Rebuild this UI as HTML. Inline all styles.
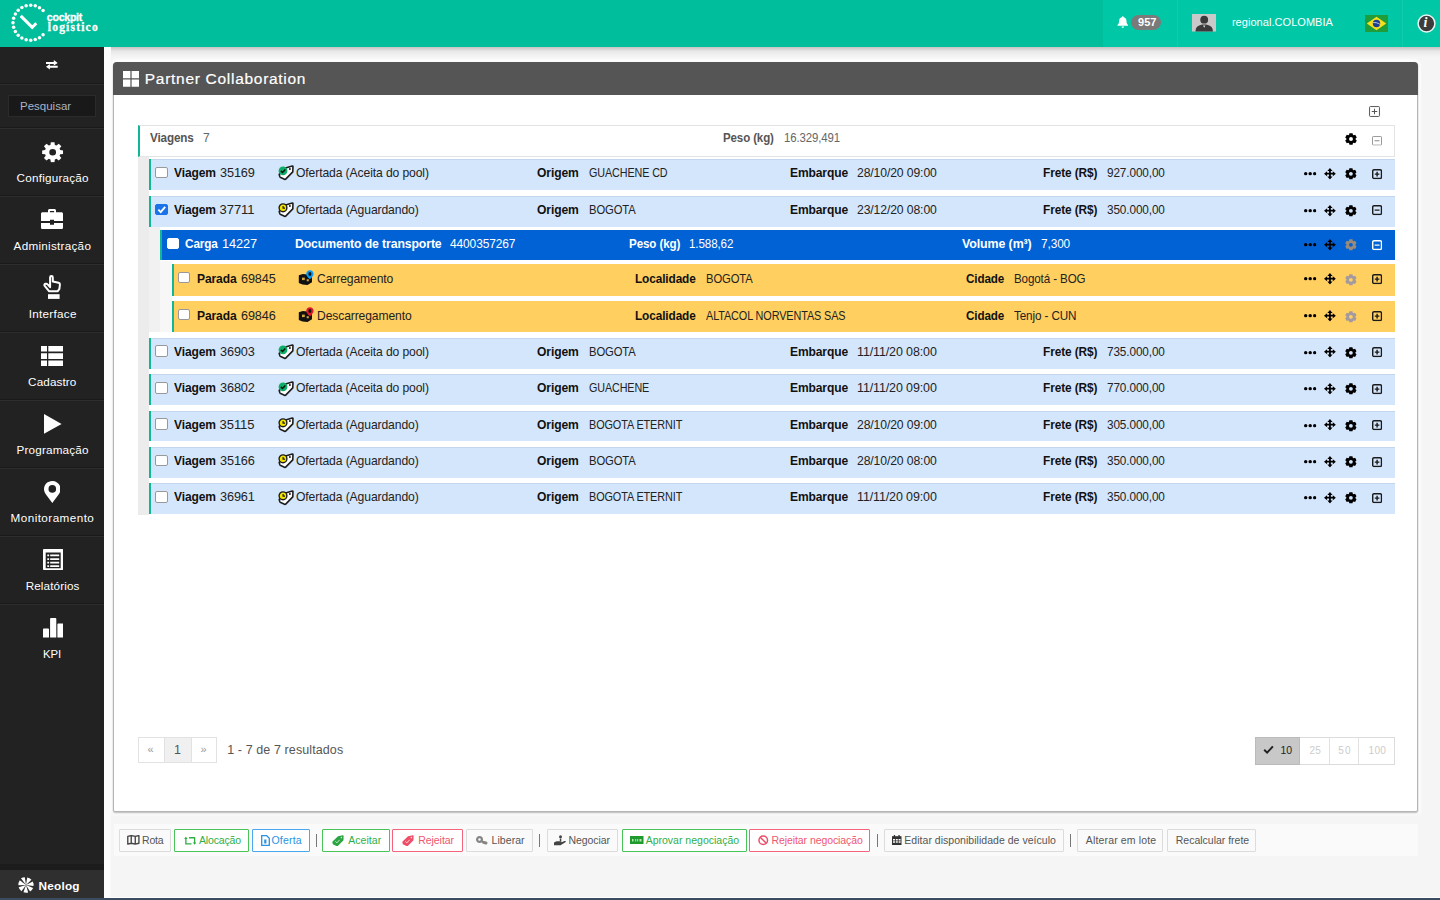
<!DOCTYPE html>
<html lang="pt-BR"><head><meta charset="utf-8"><title>Partner Collaboration</title>
<style>*{box-sizing:border-box;margin:0;padding:0}
html,body{width:1440px;height:900px;overflow:hidden}
body{position:relative;background:#f5f5f5;font-family:"Liberation Sans",sans-serif;font-size:12px;color:#222}
.abs{position:absolute}
.t{position:absolute;white-space:nowrap}
#topbar{left:0;top:0;width:1440px;height:46.5px;background:#00bd9c}
#topbar .lighter{left:1103px;top:0;width:337px;height:46.5px;background:#00c8a6}
#topshadow{left:104px;top:46.5px;width:1336px;height:10px;background:linear-gradient(#c4c4c4,#e9e9e9 45%,#f5f5f5)}
#side{left:0;top:46.5px;width:104px;height:853.5px;background:#222}
.sep{position:absolute;left:0;width:104px;height:2px;background:#2d2d2d;border-top:1px solid #1a1a1a}
#search{left:8px;top:95px;width:88px;height:22px;background:#191919;border:1px solid #2b2b2b}
#panel{left:113px;top:62px;width:1305.4px;height:749.5px;background:#fff;border:1px solid #b5b5b5;border-radius:4px 4px 2px 2px;box-shadow:0 1px 2px rgba(0,0,0,.28),0 0 2px 3px #fdfdfd}
#phead{left:113px;top:62px;width:1305.4px;height:33px;background:#555;border-radius:4px 4px 0 0}
.row{position:absolute}
.rv{background:#d4e6fc;border-left:2px solid #10b796;box-shadow:inset 0 1px 0 rgba(60,80,110,.1)}
.rc{background:#0062d5;border-left:2px solid #10b796}
.rp{background:#ffcf60;border-left:2px solid #10b796}
.cb{position:absolute;background:#fff;border:1px solid #999;border-radius:2px}
.cb.on{background:#1a73e8;border-color:#1a73e8}
.btn{position:absolute;top:829px;height:23px;border:1px solid #d8d8d8;border-radius:1px}
</style></head>
<body>
<svg width="0" height="0" style="position:absolute"><defs><symbol id="i-gear" preserveAspectRatio="none" viewBox="0 0 24 24"><path fill-rule="evenodd" d="M9.52 3.45 L9.93 0.18 L14.07 0.18 L14.48 3.45 L16.29 4.2 L18.9 2.18 L21.82 5.1 L19.8 7.71 L20.55 9.52 L23.82 9.93 L23.82 14.07 L20.55 14.48 L19.8 16.29 L21.82 18.9 L18.9 21.82 L16.29 19.8 L14.48 20.55 L14.07 23.82 L9.93 23.82 L9.52 20.55 L7.71 19.8 L5.1 21.82 L2.18 18.9 L4.2 16.29 L3.45 14.48 L0.18 14.07 L0.18 9.93 L3.45 9.52 L4.2 7.71 L2.18 5.1 L5.1 2.18 L7.71 4.2Z M15.8 12.00 A3.8 3.8 0 1 0 8.2 12.00 A3.8 3.8 0 1 0 15.8 12.00Z"/></symbol><symbol id="i-gear6" preserveAspectRatio="none" viewBox="0 0 24 24"><path fill-rule="evenodd" d="M8.14 3.54 L8.88 0.41 L15.12 0.41 L15.86 3.54 L17.39 4.42 L20.48 3.51 L23.59 8.9 L21.26 11.12 L21.26 12.88 L23.59 15.1 L20.48 20.49 L17.39 19.58 L15.86 20.46 L15.12 23.59 L8.88 23.59 L8.14 20.46 L6.61 19.58 L3.52 20.49 L0.41 15.1 L2.74 12.88 L2.74 11.12 L0.41 8.9 L3.52 3.51 L6.61 4.42Z M15.9 12.00 A3.9 3.9 0 1 0 8.1 12.00 A3.9 3.9 0 1 0 15.9 12.00Z"/></symbol><symbol id="i-dots" preserveAspectRatio="none" viewBox="0 0 12.4 3.4"><circle cx="1.7" cy="1.7" r="1.7"/><circle cx="6.2" cy="1.7" r="1.7"/><circle cx="10.7" cy="1.7" r="1.7"/></symbol><symbol id="i-move" preserveAspectRatio="none" viewBox="0 0 24 24"><path d="M12 0 L17.2 6.2 H13.8 V10.2 H17.8 V6.8 L24 12 L17.8 17.2 V13.8 H13.8 V17.8 H17.2 L12 24 L6.8 17.8 H10.2 V13.8 H6.2 V17.2 L0 12 L6.2 6.8 V10.2 H10.2 V6.2 H6.8 Z"/></symbol><symbol id="i-plus" preserveAspectRatio="none" viewBox="0 0 20 20"><rect x="1.4" y="1.4" width="17.2" height="17.2" rx="2.5" fill="none" stroke="currentColor" stroke-width="2.8"/><path d="M5.5 8.6h3.1V5.5h2.8v3.1h3.1v2.8h-3.1v3.1H8.6v-3.1H5.5z" fill="currentColor"/></symbol><symbol id="i-minus" preserveAspectRatio="none" viewBox="0 0 20 20"><rect x="1.4" y="1.4" width="17.2" height="17.2" rx="2.5" fill="none" stroke="currentColor" stroke-width="2.8"/><path d="M5.2 8.6h9.6v2.8H5.2z" fill="currentColor"/></symbol><symbol id="i-plus-thin" preserveAspectRatio="none" viewBox="0 0 20 20"><rect x="1" y="1" width="18" height="18" rx="1.5" fill="none" stroke="currentColor" stroke-width="1.8"/><path d="M5 9.1h4.1V5h1.8v4.1H15v1.8h-4.1V15H9.1v-4.1H5z" fill="currentColor"/></symbol><symbol id="i-minus-thin" preserveAspectRatio="none" viewBox="0 0 20 20"><rect x="1" y="1" width="18" height="18" rx="1.5" fill="none" stroke="currentColor" stroke-width="1.8"/><path d="M5 9.1h10v1.8H5z" fill="currentColor"/></symbol><symbol id="i-tag-ok" preserveAspectRatio="none" viewBox="0 0 16 16"><path d="M8.4 2.7 L14.3 1.1 Q14.95 1 14.95 1.7 L14.8 6.9 L7.7 14.1 Q7.2 14.5 6.5 14.2 L2.7 12.6 Q2.1 12.3 1.9 11.7 L1.2 9.4 Z" fill="#fff" stroke="#1c1c1c" stroke-width="1.6" stroke-linejoin="round"/><circle cx="11.9" cy="3.9" r="1" fill="#1c1c1c"/><circle cx="5" cy="5.8" r="4.4" fill="#0fae68"/><path d="M2.9 5.9l1.6 1.6 2.8-3.1" fill="none" stroke="#111" stroke-width="1.5"/></symbol><symbol id="i-tag-wait" preserveAspectRatio="none" viewBox="0 0 16 16"><path d="M8.4 2.7 L14.3 1.1 Q14.95 1 14.95 1.7 L14.8 6.9 L7.7 14.1 Q7.2 14.5 6.5 14.2 L2.7 12.6 Q2.1 12.3 1.9 11.7 L1.2 9.4 Z" fill="#fff" stroke="#1c1c1c" stroke-width="1.6" stroke-linejoin="round"/><circle cx="11.9" cy="3.9" r="1" fill="#1c1c1c"/><circle cx="5" cy="5.8" r="3.9" fill="#f4e300" stroke="#1c1c1c" stroke-width="1.4"/><path d="M5.1 3.9v2.2h2" fill="none" stroke="#1c1c1c" stroke-width="1.2"/></symbol><symbol id="i-load" preserveAspectRatio="none" viewBox="0 0 16 20"><path d="M0.8 9.2 L4.8 8 L9.5 8.6 L14 10.6 L14 16.2 L9.5 18.9 L4.5 18.6 L0.8 17 Z" fill="#111"/><path d="M4 11.6h2.8v2.5H4z" fill="#d9a738"/><path d="M8.7 13.3h2.1v2h-2.1z" fill="#d9a738"/><path d="M11.9 4.2c2.1 0 3.7 1.6 3.7 3.7 0 1.7-1.6 3.5-3.7 5.4-2.1-1.9-3.7-3.7-3.7-5.4 0-2.1 1.6-3.7 3.7-3.7z" fill="#0a9cf5"/><ellipse cx="11.9" cy="8" rx="1.5" ry="2" fill="#111"/></symbol><symbol id="i-unload" preserveAspectRatio="none" viewBox="0 0 16 20"><path d="M0.8 9.2 L4.8 8 L9.5 8.6 L14 10.6 L14 16.2 L9.5 18.9 L4.5 18.6 L0.8 17 Z" fill="#111"/><path d="M4 11.6h2.8v2.5H4z" fill="#d9a738"/><path d="M8.7 13.3h2.1v2h-2.1z" fill="#d9a738"/><path d="M11.9 4.2c2.1 0 3.7 1.6 3.7 3.7 0 1.7-1.6 3.5-3.7 5.4-2.1-1.9-3.7-3.7-3.7-5.4 0-2.1 1.6-3.7 3.7-3.7z" fill="#e3182d"/><ellipse cx="11.9" cy="8" rx="1.5" ry="2" fill="#111"/></symbol></defs></svg>
<div id="topbar" class="abs"><div class="abs lighter"></div><div class="abs" style="left:1176.5px;top:0;width:1px;height:46.5px;background:rgba(255,255,255,.07)"></div><div class="abs" style="left:1402px;top:0;width:1px;height:46.5px;background:rgba(255,255,255,.07)"></div></div>
<div id="topshadow" class="abs"></div>
<svg class="abs" style="left:9px;top:2px" width="42" height="42" viewBox="0 0 42 42"><g fill="#fff"><circle cx="34.09" cy="32.86" r="1.75"/><circle cx="30.48" cy="35.72" r="1.75"/><circle cx="26.26" cy="37.54" r="1.75"/><circle cx="21.7" cy="38.2" r="1.75"/><circle cx="17.13" cy="37.65" r="1.75"/><circle cx="12.87" cy="35.92" r="1.75"/><circle cx="9.2" cy="33.15" r="1.75"/><circle cx="6.38" cy="29.51" r="1.75"/><circle cx="4.61" cy="25.26" r="1.75"/><circle cx="4.00" cy="20.7" r="1.75"/><circle cx="4.61" cy="16.14" r="1.75"/><circle cx="6.38" cy="11.89" r="1.75"/><circle cx="9.2" cy="8.25" r="1.75"/><circle cx="12.87" cy="5.48" r="1.75"/><circle cx="17.13" cy="3.75" r="1.75"/><circle cx="21.7" cy="3.2" r="1.75"/><circle cx="26.26" cy="3.86" r="1.75"/><circle cx="30.48" cy="5.68" r="1.75"/><circle cx="34.09" cy="8.54" r="1.75"/></g><path d="M11.7 13.9 L23.2 25.3 L27.3 21.2" fill="none" stroke="#fff" stroke-width="3"/></svg>
<span class="t" style="left:46.8px;top:11px;font-size:10.5px;line-height:12.6px;color:#fff;font-weight:bold;letter-spacing:-0.21px;-webkit-text-stroke:.35px #fff;">cockpit</span>
<span class="t" style="left:47.8px;top:21.2px;font-size:11.5px;line-height:13.8px;color:#fff;font-weight:bold;font-family:'Liberation Serif',serif;letter-spacing:1.2px;-webkit-text-stroke:.3px #fff;">logístico</span>
<svg class="abs" style="left:1116.8px;top:16px" width="11.6" height="12" viewBox="0 0 12 13"><path d="M6 0.3c.6 0 1 .4 1 1 2 .5 3 2 3 4.2 0 2.5 .8 3.6 1.8 4.3v.7H.2v-.7C1.2 9.1 2 8 2 5.5 2 3.3 3 1.8 5 1.3c0-.6.4-1 1-1z" fill="#fff"/><path d="M4.6 11.3h2.8c0 .8-.6 1.4-1.4 1.4s-1.4-.6-1.4-1.4z" fill="#fff"/></svg>
<div class="abs" style="left:1131.4px;top:14.6px;width:30px;height:15px;background:#7a7a7a;border-radius:7.5px"></div>
<span class="t" style="left:1137.9px;top:16px;font-size:11px;line-height:13.2px;color:#fff;font-weight:bold;letter-spacing:0.12px;">957</span>
<svg class="abs" style="left:1191.5px;top:14px" width="24.5" height="17.5" viewBox="0 0 24.5 17.5"><rect width="24.5" height="17.5" fill="#c9c9c9"/><circle cx="12.2" cy="5.7" r="3.9" fill="#3a3a3a"/><path d="M3.5 17.5c0-5 3.5-7 8.7-7s8.7 2 8.7 7z" fill="#3a3a3a"/><path d="M11 11.5l1.2 2.2 1.2-2.2z" fill="#ddd"/></svg>
<span class="t" style="left:1231.9px;top:16px;font-size:11px;line-height:13.2px;color:#fff;letter-spacing:0.05px;">regional.COLOMBIA</span>
<svg class="abs" style="left:1365px;top:14.5px" width="23" height="17" viewBox="0 0 23 17"><rect width="23" height="17" fill="#1f9d3a"/><path d="M11.5 1.8L21.2 8.5 11.5 15.2 1.8 8.5z" fill="#f7df1e"/><circle cx="11.5" cy="8.5" r="3.7" fill="#1b3f94"/><path d="M7.9 7.7c2.5-.5 5 .2 7.2 1.7" stroke="#fff" stroke-width=".7" fill="none"/></svg>
<svg class="abs" style="left:1416.5px;top:13.5px" width="19" height="19" viewBox="0 0 19 19"><circle cx="9.5" cy="9.5" r="8.4" fill="#3c3c3c" stroke="#e8f6f3" stroke-width="1.5"/></svg>
<span class="t" style="left:1423.6px;top:15px;font-size:14px;line-height:16.8px;color:#fff;font-weight:bold;font-family:'Liberation Serif',serif;font-style:italic;">i</span>
<div id="side" class="abs"></div>
<div class="sep" style="top:83.4px"></div>
<div class="sep" style="top:127.4px"></div>
<div class="sep" style="top:195.32px"></div>
<div class="sep" style="top:263.24px"></div>
<div class="sep" style="top:331.16px"></div>
<div class="sep" style="top:399.08px"></div>
<div class="sep" style="top:467px"></div>
<div class="sep" style="top:534.92px"></div>
<div class="sep" style="top:602.84px"></div>
<svg class="abs" style="left:46px;top:60.2px" width="11.7" height="9.6" viewBox="0 0 11.7 9.6"><path d="M0 1.9H7.8V0L11.7 2.9 7.8 5.5V3.9H0zM11.7 5.7H3.9V4.1L0 6.7 3.9 9.6V7.7H11.7z" fill="#fff"/></svg>
<div id="search" class="abs"></div>
<span class="t" style="left:20px;top:100.1px;font-size:11.5px;line-height:13.8px;color:#a9b4c4;">Pesquisar</span>
<div class="abs" style="left:0px;top:863.5px;width:104px;height:7px;background:#1c1c1c"></div>
<div class="abs" style="left:0px;top:870px;width:104px;height:30px;background:#2f2f2f"></div>
<svg class="abs" style="left:41.6px;top:141.8px;color:#fff;fill:#fff;overflow:visible;" width="21.3" height="20.4"><use href="#i-gear"/></svg>
<span class="t" style="left:16.6px;top:171.08px;font-size:11.7px;line-height:14.04px;color:#fff;letter-spacing:0.22px;">Configuração</span>
<svg class="abs" style="left:41.1px;top:208.9px" width="22" height="20" viewBox="0 0 22 20"><path fill="#fff" fill-rule="evenodd" d="M7 3.2V1.6C7 .7 7.7 0 8.6 0h4.8c.9 0 1.6.7 1.6 1.6v1.6h5.4c.9 0 1.6.7 1.6 1.6v7.2H13v-1.3H9v1.3H0V4.8c0-.9.7-1.6 1.6-1.6zm1.9 0h4.2V1.9H8.9zM0 14.1h9v1.6h4v-1.6h9v4.3c0 .9-.7 1.6-1.6 1.6H1.6C.7 20 0 19.3 0 18.4z"/></svg>
<span class="t" style="left:13.6px;top:239px;font-size:11.7px;line-height:14.04px;color:#fff;letter-spacing:0.27px;">Administração</span>
<svg class="abs" style="left:42px;top:274px" width="20" height="26" viewBox="0 0 20 26"><path d="M8.1 12.4V3.4a1.35 1.35 0 0 1 2.7 0V7.6L16.6 8.7Q18 9.1 17.9 10.5L17.4 14.8 15.6 17.3H7.2L2.5 11.6Q2 10.3 3.4 9.8 4.8 9.4 5.6 10.4L8.1 13.2" fill="none" stroke="#fff" stroke-width="2" stroke-linejoin="round" stroke-linecap="round"/><rect x="6" y="20.2" width="11.6" height="4.7" fill="#fff"/></svg>
<span class="t" style="left:28.7px;top:306.92px;font-size:11.7px;line-height:14.04px;color:#fff;letter-spacing:0.28px;">Interface</span>
<svg class="abs" style="left:40.9px;top:346px" width="22.2" height="20.2" viewBox="0 0 22.2 20.2"><path d="M0 0h6v5.6H0zM7.3 0h14.9v5.6H7.3zM0 7.3h6v5.6H0zM7.3 7.3h14.9v5.6H7.3zM0 14.6h6v5.6H0zM7.3 14.6h14.9v5.6H7.3z" fill="#fff"/></svg>
<span class="t" style="left:28.1px;top:374.84px;font-size:11.7px;line-height:14.04px;color:#fff;letter-spacing:0.12px;">Cadastro</span>
<svg class="abs" style="left:44.2px;top:414.4px" width="17.6" height="19.8" viewBox="0 0 17.6 19.8"><path d="M0 0L17.6 9.9 0 19.8z" fill="#fff"/></svg>
<span class="t" style="left:16.6px;top:442.76px;font-size:11.7px;line-height:14.04px;color:#fff;letter-spacing:0.17px;">Programação</span>
<svg class="abs" style="left:43.8px;top:480.7px" width="16.6" height="22" viewBox="0 0 16.6 22"><path fill-rule="evenodd" d="M8.3 0c4.6 0 8.3 3.6 8.3 8 0 1.9-.6 3.3-1.6 4.9L8.3 22 1.6 12.9C.6 11.3 0 9.9 0 8c0-4.4 3.7-8 8.3-8zm0 4.1a3.8 3.8 0 1 0 0 7.6 3.8 3.8 0 0 0 0-7.6z" fill="#fff"/></svg>
<span class="t" style="left:10.6px;top:510.68px;font-size:11.7px;line-height:14.04px;color:#fff;letter-spacing:0.44px;">Monitoramento</span>
<svg class="abs" style="left:42.7px;top:548.7px" width="20.4" height="21.1" viewBox="0 0 20.4 21.1"><path fill-rule="evenodd" d="M1.2 0h18c.7 0 1.2.5 1.2 1.2v18.7c0 .7-.5 1.2-1.2 1.2h-18C.5 21.1 0 20.6 0 19.9V1.2C0 .5.5 0 1.2 0zm1.5 3.6v15.6h15V3.6zM4.3 5.6h1.8v1.7H4.3zm2.9 0h9v1.7h-9zM4.3 9.2h1.8v1.7H4.3zm2.9 0h9v1.7h-9zM4.3 12.8h1.8v1.7H4.3zm2.9 0h9v1.7h-9zM4.3 16.3h1.8V18H4.3zm2.9 0h9V18h-9z" fill="#fff"/></svg>
<span class="t" style="left:25.7px;top:578.6px;font-size:11.7px;line-height:14.04px;color:#fff;letter-spacing:0.12px;">Relatórios</span>
<svg class="abs" style="left:42.7px;top:618.2px" width="20.4" height="19.6" viewBox="0 0 20.4 19.6"><path d="M0 11.3c0-.5.4-.8.8-.8h4.4c.4 0 .8.3.8.8v8.3H0zM7.1.8c0-.4.4-.8.8-.8h4.6c.4 0 .8.4.8.8v18.8H7.1zM14.4 6.4c0-.4.4-.8.8-.8h4.4c.4 0 .8.4.8.8v13.2h-6z" fill="#fff"/></svg>
<span class="t" style="left:43.2px;top:646.52px;font-size:11.7px;line-height:14.04px;color:#fff;letter-spacing:-0.12px;transform:scaleX(0.972);transform-origin:0 0;">KPI</span>
<svg class="abs" style="left:18px;top:877.3px" width="16" height="16" viewBox="0 0 17 17"><g fill="#fff"><path d="M8.5 8.5L3.2 1.3A8.2 8.2 0 017.2.3z"/><path d="M8.5 8.5L9.8.4a8.2 8.2 0 014.5 2.5z"/><path d="M8.5 8.5l7.2-3.8a8.2 8.2 0 01.8 4.8z"/><path d="M8.5 8.5l7.6 3.2a8.2 8.2 0 01-3.3 3.8z"/><path d="M8.5 8.5l2.3 7.9a8.2 8.2 0 01-5 -.2z"/><path d="M8.5 8.5L3.7 15.2A8.2 8.2 0 01.7 11z"/><path d="M8.5 8.5L.4 8.7a8.2 8.2 0 011.5-5.2z"/></g></svg>
<span class="t" style="left:38.5px;top:878.92px;font-size:11.8px;line-height:14.16px;color:#fff;font-weight:bold;letter-spacing:0.22px;">Neolog</span>
<div class="abs" style="left:104px;top:46.5px;width:6.7px;height:852px;background:#fefefe;border-right:1px solid #f9f9f9"></div>
<div class="abs" style="left:104px;top:896.6px;width:1336px;height:2px;background:#fff"></div>
<div id="panel" class="abs"></div>
<div id="phead" class="abs"></div>
<svg class="abs" style="left:123px;top:71px" width="16" height="15.7" viewBox="0 0 16 15.7"><path d="M0 0h7.4v7.2H0zM8.6 0H16v7.2H8.6zM0 8.4h7.4v7.3H0zM8.6 8.4H16v7.3H8.6z" fill="#fff"/></svg>
<span class="t" style="left:144.8px;top:70.3px;font-size:15.5px;line-height:18.6px;color:#fff;letter-spacing:0.71px;-webkit-text-stroke:.2px #fff;">Partner Collaboration</span>
<svg class="abs" style="left:1369px;top:106px;color:#555;fill:#555;overflow:visible;" width="11" height="11"><use href="#i-plus-thin"/></svg>
<div class="abs" style="left:138px;top:124.5px;width:1256.5px;height:32px;background:#fff;border:1px solid #e4e4e4;border-left:2px solid #10b796"></div>
<span class="t" style="left:149.5px;top:131.3px;font-size:12px;line-height:14.4px;color:#555;font-weight:bold;letter-spacing:-0.12px;transform:scaleX(0.973);transform-origin:0 0;">Viagens</span>
<span class="t" style="left:203px;top:131.3px;font-size:12px;line-height:14.4px;color:#666;">7</span>
<span class="t" style="left:723.3px;top:131.3px;font-size:12px;line-height:14.4px;color:#555;font-weight:bold;letter-spacing:-0.12px;transform:scaleX(0.959);transform-origin:0 0;">Peso (kg)</span>
<span class="t" style="left:783.6px;top:131.3px;font-size:12px;line-height:14.4px;color:#666;letter-spacing:-0.12px;transform:scaleX(0.95);transform-origin:0 0;">16.329,491</span>
<svg class="abs" style="left:1345px;top:133px;color:#000;fill:#000;overflow:visible;" width="12" height="12"><use href="#i-gear6"/></svg>
<svg class="abs" style="left:1372.2px;top:135.8px;color:#8c8c8c;fill:#8c8c8c;overflow:visible;" width="10" height="9.6"><use href="#i-minus-thin"/></svg>
<div class="abs" style="left:138px;top:156.5px;width:11px;height:358px;background:#ececec"></div>
<div class="abs" style="left:149px;top:226.5px;width:11px;height:105.5px;background:#f1f1f1"></div>
<div class="abs" style="left:160px;top:260.5px;width:12px;height:71.5px;background:#f7f7f7"></div>
<div class="row rv" style="left:149px;top:158.9px;width:1245.5px;height:30.9px;"></div>
<div class="cb" style="left:155.3px;top:166.6px;width:12.8px;height:11.8px"></div>
<span class="t" style="left:174px;top:164.8px;font-size:13px;line-height:15.6px;color:#111;font-weight:bold;letter-spacing:-0.12px;transform:scaleX(0.926);transform-origin:0 0;">Viagem</span>
<span class="t" style="left:219.6px;top:164.8px;font-size:13px;line-height:15.6px;color:#222;letter-spacing:-0.12px;transform:scaleX(0.978);transform-origin:0 0;">35169</span>
<svg class="abs" style="left:278px;top:165.2px;color:#000;fill:#000;overflow:visible;" width="16" height="16"><use href="#i-tag-ok"/></svg>
<span class="t" style="left:296.3px;top:164.8px;font-size:13px;line-height:15.6px;color:#222;letter-spacing:-0.12px;transform:scaleX(0.934);transform-origin:0 0;">Ofertada (Aceita do pool)</span>
<span class="t" style="left:537.3px;top:164.8px;font-size:13px;line-height:15.6px;color:#111;font-weight:bold;letter-spacing:-0.12px;transform:scaleX(0.931);transform-origin:0 0;">Origem</span>
<span class="t" style="left:588.6px;top:164.8px;font-size:13px;line-height:15.6px;color:#222;letter-spacing:-0.12px;transform:scaleX(0.829);transform-origin:0 0;">GUACHENE CD</span>
<span class="t" style="left:790.2px;top:164.8px;font-size:13px;line-height:15.6px;color:#111;font-weight:bold;letter-spacing:-0.12px;transform:scaleX(0.927);transform-origin:0 0;">Embarque</span>
<span class="t" style="left:857px;top:164.8px;font-size:13px;line-height:15.6px;color:#222;letter-spacing:-0.12px;transform:scaleX(0.937);transform-origin:0 0;">28/10/20 09:00</span>
<span class="t" style="left:1043.4px;top:164.8px;font-size:13px;line-height:15.6px;color:#111;font-weight:bold;letter-spacing:-0.12px;transform:scaleX(0.913);transform-origin:0 0;">Frete (R$)</span>
<span class="t" style="left:1106.7px;top:164.8px;font-size:13px;line-height:15.6px;color:#222;letter-spacing:-0.12px;transform:scaleX(0.905);transform-origin:0 0;">927.000,00</span>
<svg class="abs" style="left:1304.1px;top:171.9px;color:#000;fill:#000;overflow:visible;" width="12.4" height="3.4"><use href="#i-dots"/></svg>
<svg class="abs" style="left:1324.4px;top:167.6px;color:#000;fill:#000;overflow:visible;" width="11.9" height="11.4"><use href="#i-move"/></svg>
<svg class="abs" style="left:1344.6px;top:168px;color:#000;fill:#000;overflow:visible;" width="11.8" height="11.6"><use href="#i-gear6"/></svg>
<svg class="abs" style="left:1371.8px;top:168.5px;color:#1a1a1a;fill:#1a1a1a;overflow:visible;" width="10.2" height="10.2"><use href="#i-plus"/></svg>
<div class="row rv" style="left:149px;top:195.8px;width:1245.5px;height:30.9px;"></div>
<div class="cb on" style="left:155.3px;top:203.5px;width:12.8px;height:11.8px"></div>
<svg class="abs" style="left:156.9px;top:204.9px" width="9.5" height="9" viewBox="0 0 10 9"><path d="M1.4 4.7l2.5 2.5 4.7-5.4" fill="none" stroke="#fff" stroke-width="2"/></svg>
<span class="t" style="left:174px;top:201.7px;font-size:13px;line-height:15.6px;color:#111;font-weight:bold;letter-spacing:-0.12px;transform:scaleX(0.926);transform-origin:0 0;">Viagem</span>
<span class="t" style="left:219.6px;top:201.7px;font-size:13px;line-height:15.6px;color:#222;letter-spacing:-0.07px;">37711</span>
<svg class="abs" style="left:278px;top:202.1px;color:#000;fill:#000;overflow:visible;" width="16" height="16"><use href="#i-tag-wait"/></svg>
<span class="t" style="left:296.3px;top:201.7px;font-size:13px;line-height:15.6px;color:#222;letter-spacing:-0.12px;transform:scaleX(0.935);transform-origin:0 0;">Ofertada (Aguardando)</span>
<span class="t" style="left:537.3px;top:201.7px;font-size:13px;line-height:15.6px;color:#111;font-weight:bold;letter-spacing:-0.12px;transform:scaleX(0.931);transform-origin:0 0;">Origem</span>
<span class="t" style="left:588.6px;top:201.7px;font-size:13px;line-height:15.6px;color:#222;letter-spacing:-0.12px;transform:scaleX(0.865);transform-origin:0 0;">BOGOTA</span>
<span class="t" style="left:790.2px;top:201.7px;font-size:13px;line-height:15.6px;color:#111;font-weight:bold;letter-spacing:-0.12px;transform:scaleX(0.927);transform-origin:0 0;">Embarque</span>
<span class="t" style="left:857px;top:201.7px;font-size:13px;line-height:15.6px;color:#222;letter-spacing:-0.12px;transform:scaleX(0.937);transform-origin:0 0;">23/12/20 08:00</span>
<span class="t" style="left:1043.4px;top:201.7px;font-size:13px;line-height:15.6px;color:#111;font-weight:bold;letter-spacing:-0.12px;transform:scaleX(0.913);transform-origin:0 0;">Frete (R$)</span>
<span class="t" style="left:1106.7px;top:201.7px;font-size:13px;line-height:15.6px;color:#222;letter-spacing:-0.12px;transform:scaleX(0.905);transform-origin:0 0;">350.000,00</span>
<svg class="abs" style="left:1304.1px;top:208.8px;color:#000;fill:#000;overflow:visible;" width="12.4" height="3.4"><use href="#i-dots"/></svg>
<svg class="abs" style="left:1324.4px;top:204.5px;color:#000;fill:#000;overflow:visible;" width="11.9" height="11.4"><use href="#i-move"/></svg>
<svg class="abs" style="left:1344.6px;top:204.9px;color:#000;fill:#000;overflow:visible;" width="11.8" height="11.6"><use href="#i-gear6"/></svg>
<svg class="abs" style="left:1371.8px;top:205.4px;color:#1a1a1a;fill:#1a1a1a;overflow:visible;" width="10.2" height="10.2"><use href="#i-minus"/></svg>
<div class="row rv" style="left:149px;top:337.7px;width:1245.5px;height:30.9px;"></div>
<div class="cb" style="left:155.3px;top:345.4px;width:12.8px;height:11.8px"></div>
<span class="t" style="left:174px;top:343.6px;font-size:13px;line-height:15.6px;color:#111;font-weight:bold;letter-spacing:-0.12px;transform:scaleX(0.926);transform-origin:0 0;">Viagem</span>
<span class="t" style="left:219.6px;top:343.6px;font-size:13px;line-height:15.6px;color:#222;letter-spacing:-0.12px;transform:scaleX(0.978);transform-origin:0 0;">36903</span>
<svg class="abs" style="left:278px;top:344px;color:#000;fill:#000;overflow:visible;" width="16" height="16"><use href="#i-tag-ok"/></svg>
<span class="t" style="left:296.3px;top:343.6px;font-size:13px;line-height:15.6px;color:#222;letter-spacing:-0.12px;transform:scaleX(0.934);transform-origin:0 0;">Ofertada (Aceita do pool)</span>
<span class="t" style="left:537.3px;top:343.6px;font-size:13px;line-height:15.6px;color:#111;font-weight:bold;letter-spacing:-0.12px;transform:scaleX(0.931);transform-origin:0 0;">Origem</span>
<span class="t" style="left:588.6px;top:343.6px;font-size:13px;line-height:15.6px;color:#222;letter-spacing:-0.12px;transform:scaleX(0.865);transform-origin:0 0;">BOGOTA</span>
<span class="t" style="left:790.2px;top:343.6px;font-size:13px;line-height:15.6px;color:#111;font-weight:bold;letter-spacing:-0.12px;transform:scaleX(0.927);transform-origin:0 0;">Embarque</span>
<span class="t" style="left:857px;top:343.6px;font-size:13px;line-height:15.6px;color:#222;letter-spacing:-0.12px;transform:scaleX(0.959);transform-origin:0 0;">11/11/20 08:00</span>
<span class="t" style="left:1043.4px;top:343.6px;font-size:13px;line-height:15.6px;color:#111;font-weight:bold;letter-spacing:-0.12px;transform:scaleX(0.913);transform-origin:0 0;">Frete (R$)</span>
<span class="t" style="left:1106.7px;top:343.6px;font-size:13px;line-height:15.6px;color:#222;letter-spacing:-0.12px;transform:scaleX(0.905);transform-origin:0 0;">735.000,00</span>
<svg class="abs" style="left:1304.1px;top:350.7px;color:#000;fill:#000;overflow:visible;" width="12.4" height="3.4"><use href="#i-dots"/></svg>
<svg class="abs" style="left:1324.4px;top:346.4px;color:#000;fill:#000;overflow:visible;" width="11.9" height="11.4"><use href="#i-move"/></svg>
<svg class="abs" style="left:1344.6px;top:346.8px;color:#000;fill:#000;overflow:visible;" width="11.8" height="11.6"><use href="#i-gear6"/></svg>
<svg class="abs" style="left:1371.8px;top:347.3px;color:#1a1a1a;fill:#1a1a1a;overflow:visible;" width="10.2" height="10.2"><use href="#i-plus"/></svg>
<div class="row rv" style="left:149px;top:374.2px;width:1245.5px;height:30.9px;"></div>
<div class="cb" style="left:155.3px;top:381.9px;width:12.8px;height:11.8px"></div>
<span class="t" style="left:174px;top:380.1px;font-size:13px;line-height:15.6px;color:#111;font-weight:bold;letter-spacing:-0.12px;transform:scaleX(0.926);transform-origin:0 0;">Viagem</span>
<span class="t" style="left:219.6px;top:380.1px;font-size:13px;line-height:15.6px;color:#222;letter-spacing:-0.12px;transform:scaleX(0.978);transform-origin:0 0;">36802</span>
<svg class="abs" style="left:278px;top:380.5px;color:#000;fill:#000;overflow:visible;" width="16" height="16"><use href="#i-tag-ok"/></svg>
<span class="t" style="left:296.3px;top:380.1px;font-size:13px;line-height:15.6px;color:#222;letter-spacing:-0.12px;transform:scaleX(0.934);transform-origin:0 0;">Ofertada (Aceita do pool)</span>
<span class="t" style="left:537.3px;top:380.1px;font-size:13px;line-height:15.6px;color:#111;font-weight:bold;letter-spacing:-0.12px;transform:scaleX(0.931);transform-origin:0 0;">Origem</span>
<span class="t" style="left:588.6px;top:380.1px;font-size:13px;line-height:15.6px;color:#222;letter-spacing:-0.12px;transform:scaleX(0.827);transform-origin:0 0;">GUACHENE</span>
<span class="t" style="left:790.2px;top:380.1px;font-size:13px;line-height:15.6px;color:#111;font-weight:bold;letter-spacing:-0.12px;transform:scaleX(0.927);transform-origin:0 0;">Embarque</span>
<span class="t" style="left:857px;top:380.1px;font-size:13px;line-height:15.6px;color:#222;letter-spacing:-0.12px;transform:scaleX(0.959);transform-origin:0 0;">11/11/20 09:00</span>
<span class="t" style="left:1043.4px;top:380.1px;font-size:13px;line-height:15.6px;color:#111;font-weight:bold;letter-spacing:-0.12px;transform:scaleX(0.913);transform-origin:0 0;">Frete (R$)</span>
<span class="t" style="left:1106.7px;top:380.1px;font-size:13px;line-height:15.6px;color:#222;letter-spacing:-0.12px;transform:scaleX(0.905);transform-origin:0 0;">770.000,00</span>
<svg class="abs" style="left:1304.1px;top:387.2px;color:#000;fill:#000;overflow:visible;" width="12.4" height="3.4"><use href="#i-dots"/></svg>
<svg class="abs" style="left:1324.4px;top:382.9px;color:#000;fill:#000;overflow:visible;" width="11.9" height="11.4"><use href="#i-move"/></svg>
<svg class="abs" style="left:1344.6px;top:383.3px;color:#000;fill:#000;overflow:visible;" width="11.8" height="11.6"><use href="#i-gear6"/></svg>
<svg class="abs" style="left:1371.8px;top:383.8px;color:#1a1a1a;fill:#1a1a1a;overflow:visible;" width="10.2" height="10.2"><use href="#i-plus"/></svg>
<div class="row rv" style="left:149px;top:410.6px;width:1245.5px;height:30.9px;"></div>
<div class="cb" style="left:155.3px;top:418.3px;width:12.8px;height:11.8px"></div>
<span class="t" style="left:174px;top:416.5px;font-size:13px;line-height:15.6px;color:#111;font-weight:bold;letter-spacing:-0.12px;transform:scaleX(0.926);transform-origin:0 0;">Viagem</span>
<span class="t" style="left:219.6px;top:416.5px;font-size:13px;line-height:15.6px;color:#222;letter-spacing:-0.07px;">35115</span>
<svg class="abs" style="left:278px;top:416.9px;color:#000;fill:#000;overflow:visible;" width="16" height="16"><use href="#i-tag-wait"/></svg>
<span class="t" style="left:296.3px;top:416.5px;font-size:13px;line-height:15.6px;color:#222;letter-spacing:-0.12px;transform:scaleX(0.935);transform-origin:0 0;">Ofertada (Aguardando)</span>
<span class="t" style="left:537.3px;top:416.5px;font-size:13px;line-height:15.6px;color:#111;font-weight:bold;letter-spacing:-0.12px;transform:scaleX(0.931);transform-origin:0 0;">Origem</span>
<span class="t" style="left:588.6px;top:416.5px;font-size:13px;line-height:15.6px;color:#222;letter-spacing:-0.12px;transform:scaleX(0.836);transform-origin:0 0;">BOGOTA ETERNIT</span>
<span class="t" style="left:790.2px;top:416.5px;font-size:13px;line-height:15.6px;color:#111;font-weight:bold;letter-spacing:-0.12px;transform:scaleX(0.927);transform-origin:0 0;">Embarque</span>
<span class="t" style="left:857px;top:416.5px;font-size:13px;line-height:15.6px;color:#222;letter-spacing:-0.12px;transform:scaleX(0.937);transform-origin:0 0;">28/10/20 09:00</span>
<span class="t" style="left:1043.4px;top:416.5px;font-size:13px;line-height:15.6px;color:#111;font-weight:bold;letter-spacing:-0.12px;transform:scaleX(0.913);transform-origin:0 0;">Frete (R$)</span>
<span class="t" style="left:1106.7px;top:416.5px;font-size:13px;line-height:15.6px;color:#222;letter-spacing:-0.12px;transform:scaleX(0.905);transform-origin:0 0;">305.000,00</span>
<svg class="abs" style="left:1304.1px;top:423.6px;color:#000;fill:#000;overflow:visible;" width="12.4" height="3.4"><use href="#i-dots"/></svg>
<svg class="abs" style="left:1324.4px;top:419.3px;color:#000;fill:#000;overflow:visible;" width="11.9" height="11.4"><use href="#i-move"/></svg>
<svg class="abs" style="left:1344.6px;top:419.7px;color:#000;fill:#000;overflow:visible;" width="11.8" height="11.6"><use href="#i-gear6"/></svg>
<svg class="abs" style="left:1371.8px;top:420.2px;color:#1a1a1a;fill:#1a1a1a;overflow:visible;" width="10.2" height="10.2"><use href="#i-plus"/></svg>
<div class="row rv" style="left:149px;top:446.9px;width:1245.5px;height:30.9px;"></div>
<div class="cb" style="left:155.3px;top:454.6px;width:12.8px;height:11.8px"></div>
<span class="t" style="left:174px;top:452.8px;font-size:13px;line-height:15.6px;color:#111;font-weight:bold;letter-spacing:-0.12px;transform:scaleX(0.926);transform-origin:0 0;">Viagem</span>
<span class="t" style="left:219.6px;top:452.8px;font-size:13px;line-height:15.6px;color:#222;letter-spacing:-0.12px;transform:scaleX(0.978);transform-origin:0 0;">35166</span>
<svg class="abs" style="left:278px;top:453.2px;color:#000;fill:#000;overflow:visible;" width="16" height="16"><use href="#i-tag-wait"/></svg>
<span class="t" style="left:296.3px;top:452.8px;font-size:13px;line-height:15.6px;color:#222;letter-spacing:-0.12px;transform:scaleX(0.935);transform-origin:0 0;">Ofertada (Aguardando)</span>
<span class="t" style="left:537.3px;top:452.8px;font-size:13px;line-height:15.6px;color:#111;font-weight:bold;letter-spacing:-0.12px;transform:scaleX(0.931);transform-origin:0 0;">Origem</span>
<span class="t" style="left:588.6px;top:452.8px;font-size:13px;line-height:15.6px;color:#222;letter-spacing:-0.12px;transform:scaleX(0.865);transform-origin:0 0;">BOGOTA</span>
<span class="t" style="left:790.2px;top:452.8px;font-size:13px;line-height:15.6px;color:#111;font-weight:bold;letter-spacing:-0.12px;transform:scaleX(0.927);transform-origin:0 0;">Embarque</span>
<span class="t" style="left:857px;top:452.8px;font-size:13px;line-height:15.6px;color:#222;letter-spacing:-0.12px;transform:scaleX(0.937);transform-origin:0 0;">28/10/20 08:00</span>
<span class="t" style="left:1043.4px;top:452.8px;font-size:13px;line-height:15.6px;color:#111;font-weight:bold;letter-spacing:-0.12px;transform:scaleX(0.913);transform-origin:0 0;">Frete (R$)</span>
<span class="t" style="left:1106.7px;top:452.8px;font-size:13px;line-height:15.6px;color:#222;letter-spacing:-0.12px;transform:scaleX(0.905);transform-origin:0 0;">350.000,00</span>
<svg class="abs" style="left:1304.1px;top:459.9px;color:#000;fill:#000;overflow:visible;" width="12.4" height="3.4"><use href="#i-dots"/></svg>
<svg class="abs" style="left:1324.4px;top:455.6px;color:#000;fill:#000;overflow:visible;" width="11.9" height="11.4"><use href="#i-move"/></svg>
<svg class="abs" style="left:1344.6px;top:456px;color:#000;fill:#000;overflow:visible;" width="11.8" height="11.6"><use href="#i-gear6"/></svg>
<svg class="abs" style="left:1371.8px;top:456.5px;color:#1a1a1a;fill:#1a1a1a;overflow:visible;" width="10.2" height="10.2"><use href="#i-plus"/></svg>
<div class="row rv" style="left:149px;top:483.2px;width:1245.5px;height:30.9px;"></div>
<div class="cb" style="left:155.3px;top:490.9px;width:12.8px;height:11.8px"></div>
<span class="t" style="left:174px;top:489.1px;font-size:13px;line-height:15.6px;color:#111;font-weight:bold;letter-spacing:-0.12px;transform:scaleX(0.926);transform-origin:0 0;">Viagem</span>
<span class="t" style="left:219.6px;top:489.1px;font-size:13px;line-height:15.6px;color:#222;letter-spacing:-0.12px;transform:scaleX(0.978);transform-origin:0 0;">36961</span>
<svg class="abs" style="left:278px;top:489.5px;color:#000;fill:#000;overflow:visible;" width="16" height="16"><use href="#i-tag-wait"/></svg>
<span class="t" style="left:296.3px;top:489.1px;font-size:13px;line-height:15.6px;color:#222;letter-spacing:-0.12px;transform:scaleX(0.935);transform-origin:0 0;">Ofertada (Aguardando)</span>
<span class="t" style="left:537.3px;top:489.1px;font-size:13px;line-height:15.6px;color:#111;font-weight:bold;letter-spacing:-0.12px;transform:scaleX(0.931);transform-origin:0 0;">Origem</span>
<span class="t" style="left:588.6px;top:489.1px;font-size:13px;line-height:15.6px;color:#222;letter-spacing:-0.12px;transform:scaleX(0.836);transform-origin:0 0;">BOGOTA ETERNIT</span>
<span class="t" style="left:790.2px;top:489.1px;font-size:13px;line-height:15.6px;color:#111;font-weight:bold;letter-spacing:-0.12px;transform:scaleX(0.927);transform-origin:0 0;">Embarque</span>
<span class="t" style="left:857px;top:489.1px;font-size:13px;line-height:15.6px;color:#222;letter-spacing:-0.12px;transform:scaleX(0.959);transform-origin:0 0;">11/11/20 09:00</span>
<span class="t" style="left:1043.4px;top:489.1px;font-size:13px;line-height:15.6px;color:#111;font-weight:bold;letter-spacing:-0.12px;transform:scaleX(0.913);transform-origin:0 0;">Frete (R$)</span>
<span class="t" style="left:1106.7px;top:489.1px;font-size:13px;line-height:15.6px;color:#222;letter-spacing:-0.12px;transform:scaleX(0.905);transform-origin:0 0;">350.000,00</span>
<svg class="abs" style="left:1304.1px;top:496.2px;color:#000;fill:#000;overflow:visible;" width="12.4" height="3.4"><use href="#i-dots"/></svg>
<svg class="abs" style="left:1324.4px;top:491.9px;color:#000;fill:#000;overflow:visible;" width="11.9" height="11.4"><use href="#i-move"/></svg>
<svg class="abs" style="left:1344.6px;top:492.3px;color:#000;fill:#000;overflow:visible;" width="11.8" height="11.6"><use href="#i-gear6"/></svg>
<svg class="abs" style="left:1371.8px;top:492.8px;color:#1a1a1a;fill:#1a1a1a;overflow:visible;" width="10.2" height="10.2"><use href="#i-plus"/></svg>
<div class="row rc" style="left:160px;top:230px;width:1234.5px;height:30.2px;"></div>
<div class="cb" style="left:167.2px;top:238px;width:11.5px;height:11.2px;border-color:#fff"></div>
<span class="t" style="left:185.4px;top:236.2px;font-size:13px;line-height:15.6px;color:#fff;font-weight:bold;letter-spacing:-0.12px;transform:scaleX(0.905);transform-origin:0 0;">Carga</span>
<span class="t" style="left:221.7px;top:236.2px;font-size:13px;line-height:15.6px;color:#fff;letter-spacing:-0.12px;transform:scaleX(0.981);transform-origin:0 0;">14227</span>
<span class="t" style="left:294.6px;top:236.2px;font-size:13px;line-height:15.6px;color:#fff;font-weight:bold;letter-spacing:-0.12px;transform:scaleX(0.943);transform-origin:0 0;">Documento de transporte</span>
<span class="t" style="left:450.3px;top:236.2px;font-size:13px;line-height:15.6px;color:#fff;letter-spacing:-0.12px;transform:scaleX(0.92);transform-origin:0 0;">4400357267</span>
<span class="t" style="left:628.6px;top:236.2px;font-size:13px;line-height:15.6px;color:#fff;font-weight:bold;letter-spacing:-0.12px;transform:scaleX(0.893);transform-origin:0 0;">Peso (kg)</span>
<span class="t" style="left:688.9px;top:236.2px;font-size:13px;line-height:15.6px;color:#fff;letter-spacing:-0.12px;transform:scaleX(0.892);transform-origin:0 0;">1.588,62</span>
<span class="t" style="left:962.2px;top:236.2px;font-size:13px;line-height:15.6px;color:#fff;font-weight:bold;letter-spacing:-0.12px;transform:scaleX(0.956);transform-origin:0 0;">Volume (m³)</span>
<span class="t" style="left:1040.8px;top:236.2px;font-size:13px;line-height:15.6px;color:#fff;letter-spacing:-0.12px;transform:scaleX(0.911);transform-origin:0 0;">7,300</span>
<svg class="abs" style="left:1304.1px;top:242.9px;color:#000;fill:#000;overflow:visible;" width="12.4" height="3.4"><use href="#i-dots"/></svg>
<svg class="abs" style="left:1324.4px;top:238.6px;color:#000;fill:#000;overflow:visible;" width="11.9" height="11.4"><use href="#i-move"/></svg>
<svg class="abs" style="left:1344.6px;top:239px;color:#9a8a7a;fill:#9a8a7a;overflow:visible;" width="11.8" height="11.6"><use href="#i-gear6"/></svg>
<svg class="abs" style="left:1371.8px;top:239.5px;color:#fff;fill:#fff;overflow:visible;" width="10.2" height="10.2"><use href="#i-minus"/></svg>
<div class="row rp" style="left:172px;top:264px;width:1222.5px;height:31.7px;"></div>
<div class="cb" style="left:178.3px;top:272.2px;width:11.7px;height:11.2px"></div>
<span class="t" style="left:197px;top:270.7px;font-size:13px;line-height:15.6px;color:#111;font-weight:bold;letter-spacing:-0.12px;transform:scaleX(0.927);transform-origin:0 0;">Parada</span>
<span class="t" style="left:240.5px;top:270.7px;font-size:13px;line-height:15.6px;color:#222;letter-spacing:-0.12px;transform:scaleX(0.975);transform-origin:0 0;">69845</span>
<svg class="abs" style="left:298px;top:266px;color:#000;fill:#000;overflow:visible;" width="16" height="20"><use href="#i-load"/></svg>
<span class="t" style="left:317px;top:270.7px;font-size:13px;line-height:15.6px;color:#222;letter-spacing:-0.12px;transform:scaleX(0.933);transform-origin:0 0;">Carregamento</span>
<span class="t" style="left:635.3px;top:270.7px;font-size:13px;line-height:15.6px;color:#111;font-weight:bold;letter-spacing:-0.12px;transform:scaleX(0.91);transform-origin:0 0;">Localidade</span>
<span class="t" style="left:705.5px;top:270.7px;font-size:13px;line-height:15.6px;color:#222;letter-spacing:-0.12px;transform:scaleX(0.863);transform-origin:0 0;">BOGOTA</span>
<span class="t" style="left:965.8px;top:270.7px;font-size:13px;line-height:15.6px;color:#111;font-weight:bold;letter-spacing:-0.12px;transform:scaleX(0.896);transform-origin:0 0;">Cidade</span>
<span class="t" style="left:1013.6px;top:270.7px;font-size:13px;line-height:15.6px;color:#222;letter-spacing:-0.12px;transform:scaleX(0.891);transform-origin:0 0;">Bogotá - BOG</span>
<svg class="abs" style="left:1304.1px;top:277.4px;color:#000;fill:#000;overflow:visible;" width="12.4" height="3.4"><use href="#i-dots"/></svg>
<svg class="abs" style="left:1324.4px;top:273.1px;color:#000;fill:#000;overflow:visible;" width="11.9" height="11.4"><use href="#i-move"/></svg>
<svg class="abs" style="left:1344.6px;top:273.5px;color:#a39aa0;fill:#a39aa0;overflow:visible;" width="11.8" height="11.6"><use href="#i-gear6"/></svg>
<svg class="abs" style="left:1371.8px;top:274px;color:#1a1a1a;fill:#1a1a1a;overflow:visible;" width="10.2" height="10.2"><use href="#i-plus"/></svg>
<div class="row rp" style="left:172px;top:301px;width:1222.5px;height:31px;"></div>
<div class="cb" style="left:178.3px;top:309.2px;width:11.7px;height:11.2px"></div>
<span class="t" style="left:197px;top:307.7px;font-size:13px;line-height:15.6px;color:#111;font-weight:bold;letter-spacing:-0.12px;transform:scaleX(0.927);transform-origin:0 0;">Parada</span>
<span class="t" style="left:240.5px;top:307.7px;font-size:13px;line-height:15.6px;color:#222;letter-spacing:-0.12px;transform:scaleX(0.975);transform-origin:0 0;">69846</span>
<svg class="abs" style="left:298px;top:303px;color:#000;fill:#000;overflow:visible;" width="16" height="20"><use href="#i-unload"/></svg>
<span class="t" style="left:317px;top:307.7px;font-size:13px;line-height:15.6px;color:#222;letter-spacing:-0.12px;transform:scaleX(0.931);transform-origin:0 0;">Descarregamento</span>
<span class="t" style="left:635.3px;top:307.7px;font-size:13px;line-height:15.6px;color:#111;font-weight:bold;letter-spacing:-0.12px;transform:scaleX(0.91);transform-origin:0 0;">Localidade</span>
<span class="t" style="left:705.5px;top:307.7px;font-size:13px;line-height:15.6px;color:#222;letter-spacing:-0.12px;transform:scaleX(0.834);transform-origin:0 0;">ALTACOL NORVENTAS SAS</span>
<span class="t" style="left:965.8px;top:307.7px;font-size:13px;line-height:15.6px;color:#111;font-weight:bold;letter-spacing:-0.12px;transform:scaleX(0.896);transform-origin:0 0;">Cidade</span>
<span class="t" style="left:1013.6px;top:307.7px;font-size:13px;line-height:15.6px;color:#222;letter-spacing:-0.12px;transform:scaleX(0.898);transform-origin:0 0;">Tenjo - CUN</span>
<svg class="abs" style="left:1304.1px;top:314.4px;color:#000;fill:#000;overflow:visible;" width="12.4" height="3.4"><use href="#i-dots"/></svg>
<svg class="abs" style="left:1324.4px;top:310.1px;color:#000;fill:#000;overflow:visible;" width="11.9" height="11.4"><use href="#i-move"/></svg>
<svg class="abs" style="left:1344.6px;top:310.5px;color:#a39aa0;fill:#a39aa0;overflow:visible;" width="11.8" height="11.6"><use href="#i-gear6"/></svg>
<svg class="abs" style="left:1371.8px;top:311px;color:#1a1a1a;fill:#1a1a1a;overflow:visible;" width="10.2" height="10.2"><use href="#i-plus"/></svg>
<div class="abs" style="left:138px;top:736.5px;width:79px;height:26px;background:#fff;border:1px solid #e2e2e2"></div>
<div class="abs" style="left:163.5px;top:737.5px;width:28px;height:24px;background:#f0f0f0;border-left:1px solid #e2e2e2;border-right:1px solid #e2e2e2"></div>
<span class="t" style="left:147.5px;top:742.9px;font-size:11px;line-height:13.2px;color:#999;">«</span>
<span class="t" style="left:174px;top:742.5px;font-size:12.5px;line-height:15px;color:#555;">1</span>
<span class="t" style="left:200.5px;top:742.9px;font-size:11px;line-height:13.2px;color:#999;">»</span>
<span class="t" style="left:227.2px;top:742.6px;font-size:12.5px;line-height:15px;color:#555;letter-spacing:0.1px;">1 - 7 de 7 resultados</span>
<div class="abs" style="left:1254.5px;top:736.5px;width:140px;height:28px;background:#fff;border:1px solid #dcdcdc"></div>
<div class="abs" style="left:1254.5px;top:736.5px;width:45px;height:28px;background:#c8c8c8;border:1px solid #bbb"></div>
<div class="abs" style="left:1328.5px;top:737.5px;width:1px;height:26px;background:#e2e2e2"></div>
<div class="abs" style="left:1358px;top:737.5px;width:1px;height:26px;background:#e2e2e2"></div>
<svg class="abs" style="left:1263px;top:745px" width="11" height="9" viewBox="0 0 11 9"><path d="M1.2 4.8l2.9 2.8 5.8-6.2" fill="none" stroke="#222" stroke-width="2"/></svg>
<span class="t" style="left:1280.6px;top:744.2px;font-size:10.5px;line-height:12.6px;color:#222;letter-spacing:-0.19px;">10</span>
<span class="t" style="left:1309.4px;top:744.5px;font-size:10px;line-height:12px;color:#ccc;letter-spacing:0.37px;">25</span>
<span class="t" style="left:1338.2px;top:744.5px;font-size:10px;line-height:12px;color:#ccc;letter-spacing:1.17px;">50</span>
<span class="t" style="left:1368.5px;top:744.5px;font-size:10px;line-height:12px;color:#ccc;letter-spacing:0.36px;">100</span>
<div class="abs" style="left:114px;top:823.5px;width:1304px;height:32px;background:#fafafa"></div>
<div class="btn" style="left:119.2px;width:52.3px;border-color:#dcdcdc;background:#fafafa"></div>
<span class="t" style="left:142px;top:834.1px;font-size:10.5px;line-height:12.6px;color:#555;letter-spacing:-0.2px;">Rota</span>
<svg class="abs" style="left:127.3px;top:835px" width="12.7" height="9.6" viewBox="0 0 13 10"><path d="M.7 1.5L4.3.6l4.2.9L12.3.6v8L8.5 9.5 4.3 8.6.7 9.5zM4.3.6v8M8.5 1.5v8" fill="none" stroke="#444" stroke-width="1.4" stroke-linejoin="round"/></svg>
<div class="btn" style="left:174px;width:75px;border-color:#48c458;background:#fff"></div>
<span class="t" style="left:199px;top:834.1px;font-size:10.5px;line-height:12.6px;color:#2fae46;letter-spacing:-0.16px;">Alocação</span>
<svg class="abs" style="left:183.5px;top:835.5px" width="12.5" height="9.5" viewBox="0 0 13 10"><path d="M2.6 3.2V7.5h5.2V9H1.2V3.2H0L1.9.8 3.8 3.2zM10.4 6.8V2.5H5.2V1h6.6v5.8H13l-1.9 2.4L9.2 6.8z" fill="#2fae46"/></svg>
<div class="btn" style="left:252px;width:57.5px;border-color:#4aa8ee;background:#fff"></div>
<span class="t" style="left:271.5px;top:834.1px;font-size:10.5px;line-height:12.6px;color:#2b93e0;letter-spacing:0.18px;">Oferta</span>
<svg class="abs" style="left:260.5px;top:834.5px" width="9" height="11" viewBox="0 0 9 11"><path d="M.7.7h5L8.3 3.3v7H.7z" fill="none" stroke="#2b93e0" stroke-width="1.3"/><path d="M3.2 4.5h2.2v4H3.2z" fill="#2b93e0"/></svg>
<div class="abs" style="left:315.5px;top:834px;width:1px;height:13px;background:#777"></div>
<div class="btn" style="left:322px;width:67.8px;border-color:#48c458;background:#fff"></div>
<span class="t" style="left:348.2px;top:834.1px;font-size:10.5px;line-height:12.6px;color:#2fae46;letter-spacing:0.05px;">Aceitar</span>
<svg class="abs" style="left:332px;top:834.5px" width="12" height="11.5" viewBox="0 0 12 11.5"><path d="M6 1.3L10.8.3Q11.6.2 11.6 1L11.5 5.3 5.8 11Q5.3 11.4 4.7 11.1L1.3 9.5Q.7 9.1.6 8.5L.3 6.8z" fill="#2aa541"/><path d="M3.4 6.3l1.5 1.5 2.8-3" fill="none" stroke="#fff" stroke-width="1" opacity=".75"/><circle cx="9.4" cy="2.6" r=".8" fill="#fff" opacity=".8"/></svg>
<div class="btn" style="left:392.3px;width:70.5px;border-color:#f4657d;background:#fff"></div>
<span class="t" style="left:418.2px;top:834.1px;font-size:10.5px;line-height:12.6px;color:#f0566f;letter-spacing:-0.04px;">Rejeitar</span>
<svg class="abs" style="left:402px;top:834.5px" width="12" height="11.5" viewBox="0 0 12 11.5"><path d="M6 1.3L10.8.3Q11.6.2 11.6 1L11.5 5.3 5.8 11Q5.3 11.4 4.7 11.1L1.3 9.5Q.7 9.1.6 8.5L.3 6.8z" fill="#ee4e68"/><path d="M3.4 6.3l1.5 1.5 2.8-3" fill="none" stroke="#fff" stroke-width="1" opacity=".75"/><circle cx="9.4" cy="2.6" r=".8" fill="#fff" opacity=".8"/></svg>
<div class="btn" style="left:465.5px;width:67.3px;border-color:#dcdcdc;background:#fafafa"></div>
<span class="t" style="left:491.5px;top:834.1px;font-size:10.5px;line-height:12.6px;color:#555;letter-spacing:0.07px;">Liberar</span>
<svg class="abs" style="left:475.5px;top:835.5px" width="12" height="9.5" viewBox="0 0 12 9.5"><circle cx="3.5" cy="3.5" r="2.4" fill="none" stroke="#858585" stroke-width="2.2"/><path d="M4.8 4.3l5.4 1.2c1 .3 1.4 1 1.2 1.9-.2.8-1 1.2-1.9 1L6.5 7.5z" fill="#858585"/></svg>
<div class="abs" style="left:539px;top:834px;width:1px;height:13px;background:#777"></div>
<div class="btn" style="left:546.5px;width:71.3px;border-color:#dcdcdc;background:#fafafa"></div>
<span class="t" style="left:568.5px;top:834.1px;font-size:10.5px;line-height:12.6px;color:#555;letter-spacing:-0.09px;">Negociar</span>
<svg class="abs" style="left:554px;top:834.5px" width="12" height="11" viewBox="0 0 12 11"><circle cx="6.5" cy="1.8" r="1.5" fill="#444"/><path d="M5.8 3.5h1.5v2.8H5.8z" fill="#444"/><path d="M0 7.5l2.5-1.2h3.8c.8 0 1.2.4 1.2 1l3-1.3c.8-.3 1.5.2 1.3.9L6.5 10.2H0z" fill="#444"/></svg>
<div class="btn" style="left:621.5px;width:125.5px;border-color:#48c458;background:#fff"></div>
<span class="t" style="left:645.7px;top:834.1px;font-size:10.5px;line-height:12.6px;color:#2fae46;">Aprovar negociação</span>
<svg class="abs" style="left:630px;top:835.5px" width="13.5" height="8.5" viewBox="0 0 13.5 8.5"><rect width="13.5" height="8.5" fill="#1f9a2c"/><path d="M2 3h1.5v2.5H2zM5.2 3h1v2.5h-1zM7.2 3h1v2.5h-1zM9.5 3H11.5v2.5H9.5z" fill="#b6e6b9"/></svg>
<div class="btn" style="left:749.3px;width:120.7px;border-color:#f4657d;background:#fff"></div>
<span class="t" style="left:771.5px;top:834.1px;font-size:10.5px;line-height:12.6px;color:#f0566f;letter-spacing:-0.08px;">Rejeitar negociação</span>
<svg class="abs" style="left:758px;top:835px" width="10.5" height="10.5" viewBox="0 0 10.5 10.5"><circle cx="5.25" cy="5.25" r="4.3" fill="none" stroke="#ee4e68" stroke-width="1.5"/><path d="M2.2 2.2l6.1 6.1" stroke="#ee4e68" stroke-width="1.5"/></svg>
<div class="abs" style="left:876.5px;top:834px;width:1px;height:13px;background:#777"></div>
<div class="btn" style="left:883.7px;width:180.1px;border-color:#dcdcdc;background:#fafafa"></div>
<span class="t" style="left:904.3px;top:834.1px;font-size:10.5px;line-height:12.6px;color:#555;letter-spacing:0.03px;">Editar disponibilidade de veículo</span>
<svg class="abs" style="left:892px;top:835px" width="9.5" height="10" viewBox="0 0 9.5 10"><path d="M0 1.2h9.5V10H0z" fill="#333"/><path d="M1.8 0h1.3v2H1.8zM6.4 0h1.3v2H6.4z" fill="#333"/><path d="M1 4h2v1.5H1zM3.8 4h2v1.5h-2zM6.6 4h2v1.5h-2zM1 6.3h2v1.5H1zM3.8 6.3h2v1.5h-2zM6.6 6.3h2v1.5h-2z" fill="#fafafa"/></svg>
<div class="abs" style="left:1070px;top:834px;width:1px;height:13px;background:#777"></div>
<div class="btn" style="left:1077.2px;width:86.1px;border-color:#dcdcdc;background:#fafafa"></div>
<span class="t" style="left:1085.8px;top:834.1px;font-size:10.5px;line-height:12.6px;color:#555;letter-spacing:0.15px;">Alterar em lote</span>
<div class="btn" style="left:1166.7px;width:89.6px;border-color:#dcdcdc;background:#fafafa"></div>
<span class="t" style="left:1175.8px;top:834.1px;font-size:10.5px;line-height:12.6px;color:#555;letter-spacing:-0.01px;">Recalcular frete</span>
<div class="abs" style="left:0px;top:898.4px;width:1440px;height:1.6px;background:#3a4d60"></div>
</body></html>
